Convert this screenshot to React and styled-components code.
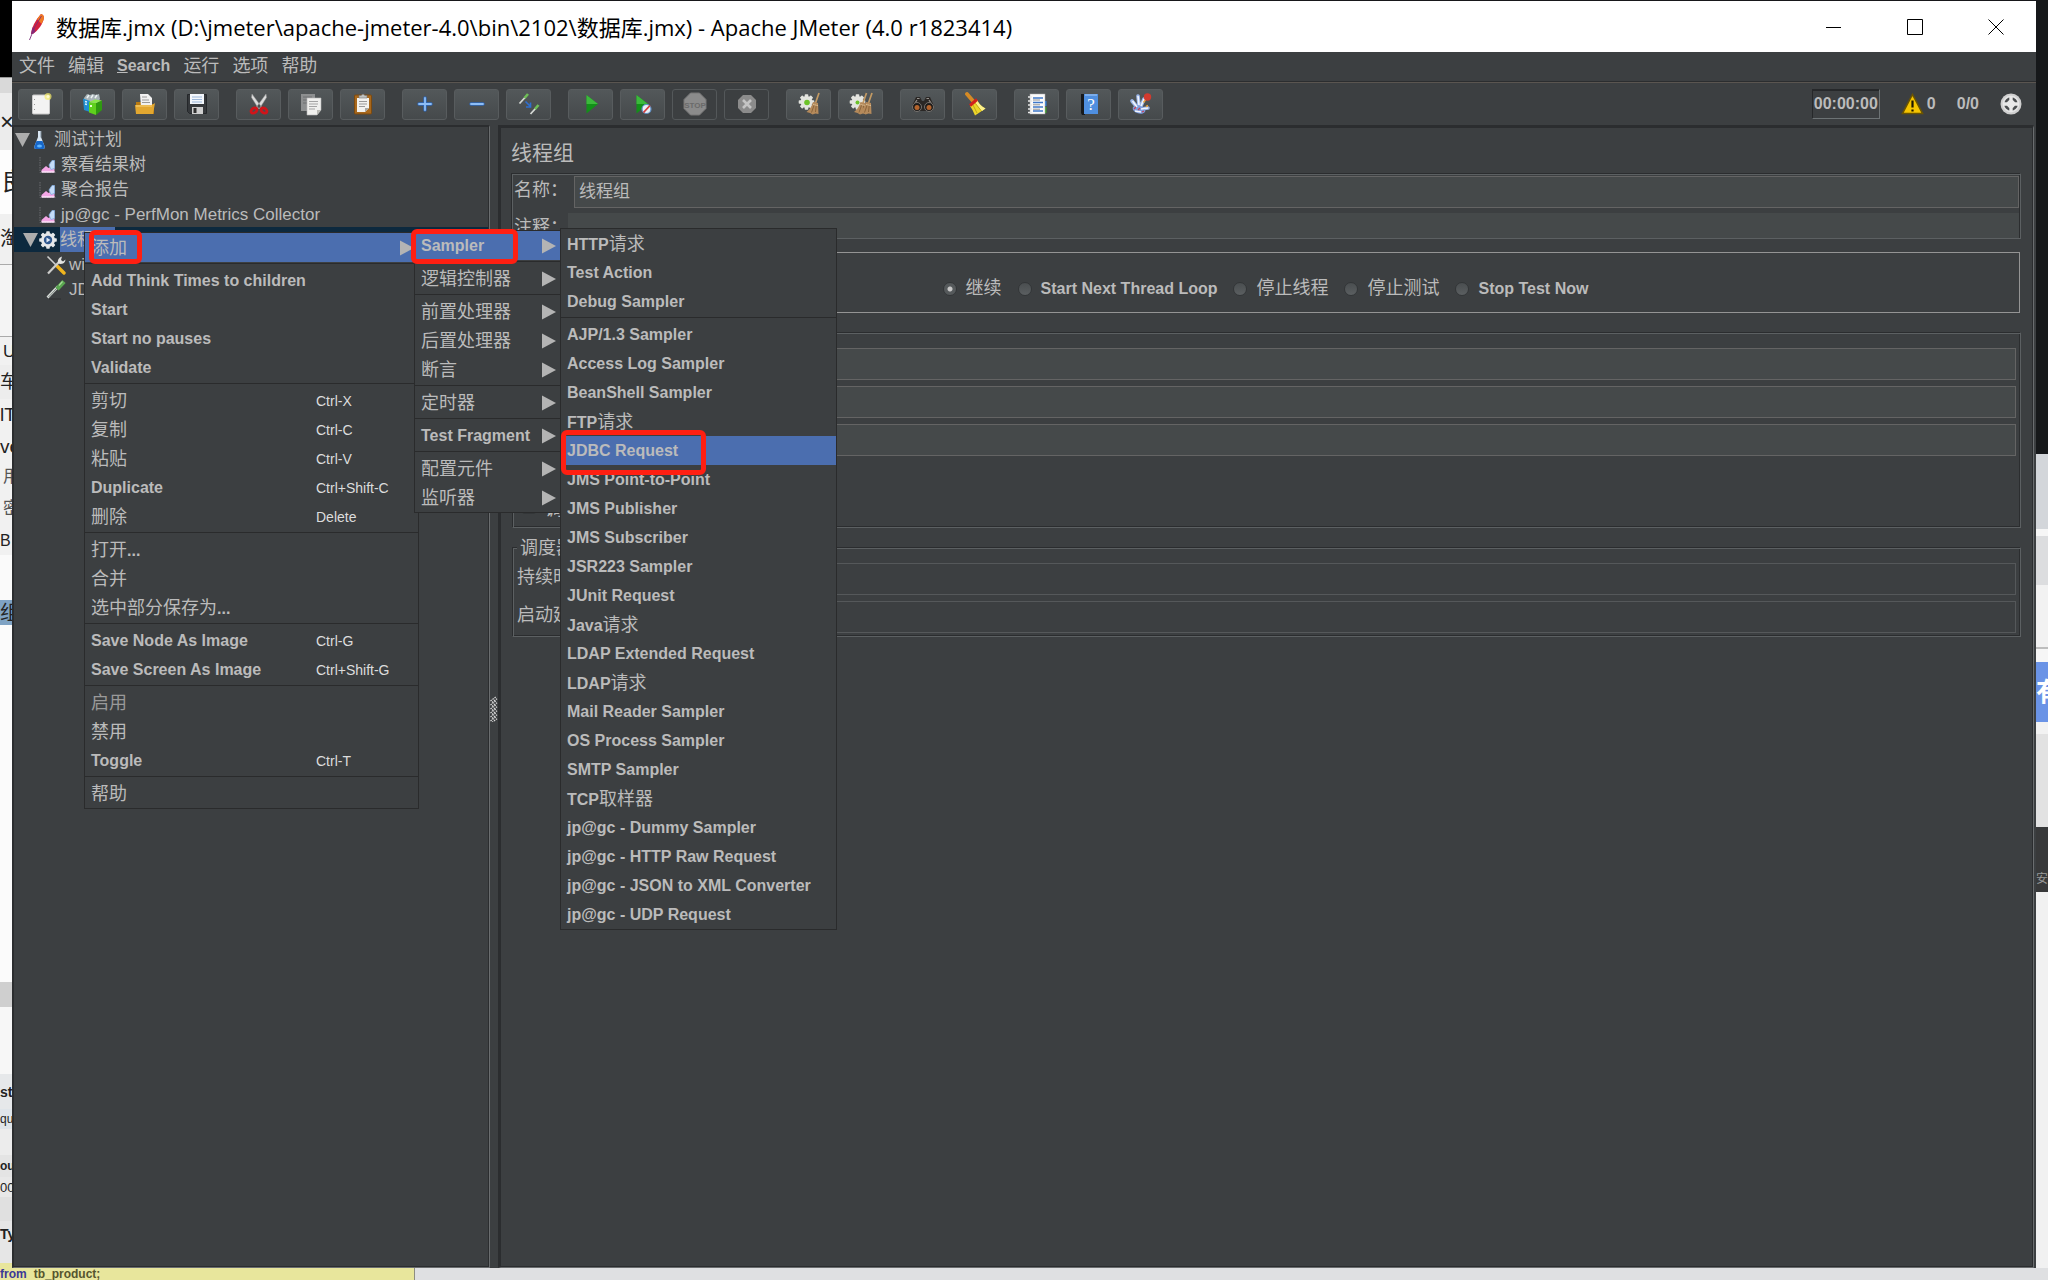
import React from "react";
import styled, { createGlobalStyle, css } from "styled-components";

const SANS = `"Liberation Sans", Arial, "Noto Sans CJK SC", sans-serif`;

const GlobalStyle = createGlobalStyle`
  *, *::before, *::after { box-sizing: border-box; }
  html, body { margin: 0; height: 100%; overflow: hidden; }
  #root { height: 100%; }
  body { background: #e6e6e8; font-family: ${SANS}; font-size: 16px; color: #bbbbbb; }
  button, input { font: inherit; color: inherit; margin: 0; }
  ul { list-style: none; margin: 0; padding: 0; }
`;

/* ---------- desktop behind the window ---------- */

const Desktop = styled.div`
  position: relative;
  display: grid;
  grid-template-columns: 12px minmax(0, 1fr) 12px;
  grid-template-rows: minmax(0, 1fr) 12px;
  height: 100vh;
  overflow: hidden;
`;

const Strip = styled.div`
  display: flex;
  flex-direction: column;
  overflow: hidden;
  min-height: 0;
`;

const Slab = styled.div`
  flex: ${(p) => (p.$h ? `0 0 ${p.$h}px` : "1 1 0")};
  display: flex;
  align-items: center;
  justify-content: flex-start;
  padding-left: ${(p) => p.$pad || 0}px;
  overflow: hidden;
  white-space: nowrap;
  line-height: 1;
  background: ${(p) => p.$bg};
  color: ${(p) => p.$fg || "#222"};
  font-size: ${(p) => p.$size || 18}px;
  font-weight: ${(p) => p.$weight || 400};
`;

const Footer = styled.div`
  grid-column: 1 / -1;
  display: flex;
  background: #dfe0e2;
`;

const SqlBar = styled.div`
  display: flex;
  align-items: center;
  gap: 7px;
  width: 415px;
  overflow: hidden;
  background: #e8e69c;
  border-right: 1px solid #8d8d80;
  color: #55552e;
  font: bold 12px/12px "Liberation Sans", sans-serif;
  b { color: #3b3a96; }
`;

/* ---------- window frame ---------- */

const Window = styled.main`
  display: flex;
  flex-direction: column;
  min-width: 0;
  min-height: 0;
  background: #3c3f41;
  border-top: 1px solid #17171a;
`;

const TitleBar = styled.header`
  flex: 0 0 51px;
  display: flex;
  align-items: center;
  background: #fff;
  color: #000;
  padding-left: 14px;
`;

const TitleText = styled.h1`
  flex: 1;
  margin: 0 0 0 10px;
  font: 400 22px/28px "Open Sans", "Noto Sans CJK SC", sans-serif;
  white-space: nowrap;
`;

const TitleButton = styled.button`
  width: 81px;
  height: 100%;
  border: 0;
  padding: 0;
  background: transparent;
  display: flex;
  align-items: center;
  justify-content: center;
`;

const MenuBar = styled.nav`
  flex: 0 0 31px;
  display: flex;
  align-items: center;
  gap: 13px;
  padding: 0 7px 2px;
  border-bottom: 1px solid #5a5550;
  box-shadow: inset 0 -1px #2b2d2f;
`;

const MenuBarButton = styled.button`
  border: 0;
  padding: 0;
  background: none;
  font-weight: bold;
  line-height: 24px;
`;

const Han = styled.span`
  font-size: 18px;
  font-weight: 400;
`;

const ToolBar = styled.div`
  flex: 0 0 42px;
  display: flex;
  align-items: center;
  gap: 17px;
  padding: 0 14px 0 6px;
`;

const ToolGroup = styled.div`
  display: flex;
  gap: 7px;
`;

const ToolButton = styled.button`
  width: 45px;
  height: 31px;
  padding: 0;
  display: flex;
  align-items: center;
  justify-content: center;
  border: 1px solid #585c5e;
  border-radius: 3px;
  background: linear-gradient(#53585a, #45494b);
  &:disabled { background: #3c3f41; border-color: #54585a; }
`;

const Status = styled.div`
  margin-left: auto;
  display: flex;
  align-items: center;
  font-weight: bold;
  gap: 21px;
`;

const Timer = styled.output`
  height: 30px;
  line-height: 28px;
  padding: 0 1px;
  border: 1px solid;
  border-color: #26282a #6d7375 #6d7375 #26282a;
  box-shadow: inset 0 1px #26282a;
`;

const Warning = styled.span`
  display: flex;
  align-items: center;
  gap: 3px;
`;

const Split = styled.div`
  flex: 1;
  display: flex;
  min-height: 0;
`;

/* ---------- tree ---------- */

const TreePane = styled.section`
  flex: 0 0 478px;
  border: solid;
  border-width: 2px 1px 1px 2px;
  border-color: #2b2d2f #6a6d6f #6a6d6f #2b2d2f;
  box-shadow: inset -1px -1px #2b2d2f;
  font-size: 17px;
`;

const TreeRow = styled.li`
  display: flex;
  align-items: center;
  height: 25px;
  margin-right: 1px;
  padding-left: ${(p) => p.$indent}px;
  white-space: nowrap;
  ${(p) => p.$selected && css`background: #0d293e;`}
`;

const TreeLabel = styled.span`
  line-height: 25px;
  margin-left: ${(p) => p.$gap}px;
  ${(p) => p.$selected && css`background: #4b6eaf; padding-right: 4px;`}
`;

const Divider = styled.div`
  flex: 0 0 8px;
  display: flex;
  align-items: center;
  justify-content: center;
  padding-top: 24px;
`;

/* ---------- editor pane ---------- */

const Editor = styled.section`
  flex: 1;
  min-width: 0;
  border: solid;
  border-width: 3px 1px 1px 3px;
  border-color: #2b2d2f #6a6d6f #6a6d6f #2b2d2f;
  box-shadow: inset -1px -1px #2b2d2f;
  margin-right: 2px;
  padding: 9px 12px 0 10px;
`;

const EditorTitle = styled.h2`
  margin: 0 0 4px;
  font-size: 21px;
  font-weight: 400;
  line-height: 32px;
`;

const etched = css`
  border: 1px solid;
  border-color: #2b2d2f #5c6062 #5c6062 #2b2d2f;
  box-shadow: inset 1px 1px #5c6062, inset -1px -1px #2b2d2f;
`;

const NameBox = styled.div`
  ${etched}
  display: flex;
  flex-direction: column;
  gap: 5px;
  padding: 2px 1px 0 2px;
`;

const NameRow = styled.div`
  display: flex;
  align-items: flex-start;
  gap: ${(p) => p.$gap}px;
`;

const Label = styled.label`
  flex: 0 0 ${(p) => p.$w}px;
  height: 25px;
  overflow: hidden;
  white-space: nowrap;
  font-size: 18px;
  line-height: 28px;
`;

const Field = styled.input`
  flex: 1;
  min-width: 0;
  height: 32px;
  padding: 0 4px 6px;
  font-size: 17px;
  border: 1px solid #646464;
  background: #45494a;
  &:disabled { background: #3c3f41; border-color: #55585a; }
`;

const CommentField = styled(Field)`
  height: 25px;
  border: 0;
`;

const ActionBox = styled.div`
  display: flex;
  align-items: center;
  justify-content: center;
  gap: 16px;
  height: 61px;
  margin: 13px 1px 0 0;
  padding-top: 12px;
  border: 1px solid #949494;
  font-weight: bold;
`;

const RadioLabel = styled.label`
  display: flex;
  align-items: center;
  gap: 9px;
  white-space: nowrap;
  line-height: 24px;
`;

const Radio = styled.input`
  appearance: none;
  width: 14px;
  height: 14px;
  border-radius: 50%;
  border: 1px solid #333638;
  background: linear-gradient(#4a4e50, #5b5f61);
  &:checked {
    background: radial-gradient(circle, #c8c8c8 0 2px, #55595b 3px);
  }
`;

const Group = styled.div`
  ${etched}
  position: relative;
  display: flex;
  flex-direction: column;
  gap: 6px;
  margin: 19px 0 0 1px;
  padding: 15px 4px ${(p) => p.$bottom}px 4px;
`;

const GroupTitle = styled.span`
  position: absolute;
  left: 4px;
  top: -12px;
  padding: 0 3px;
  background: #3c3f41;
  font-size: 18px;
  line-height: 24px;
`;

const GroupRow = styled.div`
  display: flex;
  gap: 6px;
`;

const CheckRow = styled.label`
  display: flex;
  align-items: center;
  gap: 9px;
  height: 26px;
  padding-left: 5px;
  font-size: 18px;
`;

const Check = styled.input`
  appearance: none;
  width: 14px;
  height: 14px;
  border: 1px solid #333638;
  border-radius: 2px;
  background: #5a5e58;
`;

/* ---------- pop-up menus ---------- */

const Popup = styled.ul`
  position: absolute;
  left: ${(p) => p.$x}px;
  top: ${(p) => p.$y}px;
  width: ${(p) => p.$w}px;
  background: #3c3f41;
  border: 1px solid #2a2b2c;
`;

const Item = styled.button`
  display: grid;
  grid-template-columns: minmax(0, 1fr) auto;
  align-items: center;
  width: 100%;
  height: 29px;
  padding: 0 4px 0 6px;
  border: 0;
  background: ${(p) => (p.$active ? "#4b6eaf" : "transparent")};
  text-align: left;
  font-weight: bold;
  line-height: 20px;
  white-space: nowrap;
  &:disabled { color: #999999; }
`;

const ItemText = styled.span`
  height: 20px;
`;

const Shortcut = styled.kbd`
  width: 98px;
  font: 400 14px/18px ${SANS};
  color: #dddddd;
`;

const Separator = styled.li`
  height: 4px;
  padding-top: 1px;
  &::before { content: ""; display: block; height: 1px; background: #2a2b2c; }
`;

const Marker = styled.div`
  position: absolute;
  left: ${(p) => p.$x}px;
  top: ${(p) => p.$y}px;
  width: ${(p) => p.$w}px;
  height: ${(p) => p.$h}px;
  border: 5px solid #ff1f12;
  border-radius: 6px;
  pointer-events: none;
`;

/* ---------- drawings ---------- */

const Svg = ({ w = 24, h = 24, vb = "0 0 24 24", children }) => (
  <svg width={w} height={h} viewBox={vb} fill="none" aria-hidden="true">
    {children}
  </svg>
);

const Broom = ({ x = 0 }) => (
  <g transform={`translate(${x} 0)`}>
    <path d="M19.500 1 16 11" stroke="#c39a63" strokeWidth="1.700" />
    <path d="M13.500 10 18.500 11 19 22 16 21.500 13 22.500 10.500 21 7 20Q12 16 13.500 10Z" fill="#b58a5b" />
    <path d="M15 12 12 20.500M16.800 12.500 16 20" stroke="#7f5a32" strokeWidth=".8" />
    <path d="M13.500 12.500 18.500 13.500" stroke="#e1c294" strokeWidth=".9" />
  </g>
);

const Cog = ({ cx, cy, r, fill }) => (
  <g>
    {[0, 45, 90, 135].map((a) => (
      <rect key={a} x={cx - 1.800} y={cy - r - 1.800} width="3.600" height={2 * r + 3.600} rx=".8" fill={fill} transform={`rotate(${a} ${cx} ${cy})`} />
    ))}
    <circle cx={cx} cy={cy} r={r} fill={fill} />
  </g>
);

const icons = {
  new: (
    <>
      <rect x="3.500" y="3" width="17" height="19" rx="1" fill="#f3f3f3" stroke="#c9c9c9" />
      <path d="M5.500 7v1M5.500 12v1M5.500 17v1" stroke="#999" />
      <circle cx="19" cy="4.500" r="3.500" fill="#f6ec6b" opacity=".7" />
      <circle cx="19" cy="4.500" r="1.500" fill="#fffbd0" />
    </>
  ),
  templates: (
    <>
      <path d="M3 6 6 2l3 1 3-1 3 1 3-1 1 5-3 4H4Z" fill="#a9b4b8" />
      <path d="M6 6 8 3M10 6l2-3M14 6l2-3" stroke="#eef2f3" strokeWidth="1.500" />
      <path d="M2 6.500 9 9v11L3 18Z" fill="#1f8fd1" />
      <path d="M4 9.500 6 10M4 12l2 .5" stroke="#d4efff" strokeWidth="1.500" />
      <path d="M8 10 15 11v12L8 20.500Z" fill="#5fd11d" />
      <path d="M15 11 21 8.500V18l-6 5Z" fill="#2f9a10" />
      <path d="M8 10 14 7.500 21 8.500 15 11Z" fill="#8ae84a" />
      <path d="M10 13v2" stroke="#e6ffd4" strokeWidth="2" />
    </>
  ),
  open: (
    <>
      <path d="M3 10h7l1 2h10v10H3Z" fill="#b87a12" />
      <path d="M7 2h8l4 4v9H8Z" fill="#f1f1f1" />
      <path d="M9 5h5M9 8h7M9 10.500h8" stroke="#9a9a9a" />
      <path d="M2 13h17l3-2-2 11H3Z" fill="#e2a730" />
      <path d="M3 14h16" stroke="#f7d27a" />
    </>
  ),
  save: (
    <>
      <path d="M2.500 2.500h19v19h-17l-2-2Z" fill="#35383b" stroke="#24272a" />
      <rect x="5" y="2" width="14" height="10" fill="#f2f6fb" />
      <path d="M7 5h10M7 7.500h10M7 10h10" stroke="#9bb6d8" />
      <rect x="7" y="15" width="11" height="7" fill="#cfcfcf" />
      <rect x="8.500" y="16" width="3" height="5" fill="#303030" />
    </>
  ),
  cut: (
    <>
      <path d="M5 2 14.500 15l-3 1.500L4.500 5.500ZM19 2 9.500 15l3 1.500L19.500 5.500Z" fill="#dcdcdc" stroke="#9a9a9a" strokeWidth=".5" />
      <ellipse cx="7" cy="18.500" rx="3.200" ry="2.300" transform="rotate(-35 7 18.500)" stroke="#d0141a" strokeWidth="2.800" />
      <ellipse cx="17" cy="18.500" rx="3.200" ry="2.300" transform="rotate(35 17 18.500)" stroke="#d0141a" strokeWidth="2.800" />
    </>
  ),
  copy: (
    <>
      <path d="M2 2h14v17H2Z" fill="#8d8f90" />
      <path d="M4 5h9M4 8h5M4 11h4" stroke="#6d6f70" />
      <path d="M8 6h14v12l-4 5H8Z" fill="#f0f0ee" stroke="#b5b5b5" strokeWidth=".6" />
      <path d="M22 18h-4v5Z" fill="#b9b9b4" />
      <path d="M10 9.500h9M10 12h9M10 14.500h8M10 17h6" stroke="#a4a4a4" />
    </>
  ),
  paste: (
    <>
      <rect x="3.500" y="3" width="17" height="19" rx="1" fill="#a8681c" stroke="#7c4a10" />
      <path d="M6 6h12v10l-4 4H6Z" fill="#f2f2ef" />
      <path d="M18 16h-4v4Z" fill="#a9a9a5" />
      <path d="M8 9.500h8M8 12h8M8 14.500h6" stroke="#999" />
      <path d="M8 3.500h2L12 2l2 1.500h2V6H8Z" fill="#bfc2c0" stroke="#777" strokeWidth=".6" />
    </>
  ),
  plus: (
    <>
      <path d="M12 6v12M6 12h12" stroke="#2f68b8" strokeWidth="3.400" strokeLinecap="round" />
      <path d="M12 6v12M6 12h12" stroke="#8dbdf5" strokeWidth="1.800" strokeLinecap="round" />
    </>
  ),
  minus: (
    <>
      <path d="M6 12h12" stroke="#2f68b8" strokeWidth="3.400" strokeLinecap="round" />
      <path d="M6 12h12" stroke="#8dbdf5" strokeWidth="1.800" strokeLinecap="round" />
    </>
  ),
  toggle: (
    <>
      <path d="M2.500 11.500 8 5.500" stroke="#d5d9d5" strokeWidth="1.800" />
      <path d="M7.500 6 11 2" stroke="#6fbf57" strokeWidth="2.600" />
      <path d="M13.500 22 18.500 16.500" stroke="#d5d9d5" strokeWidth="1.800" />
      <path d="M18 17 21.500 13" stroke="#6fbf57" strokeWidth="2.600" />
      <path d="M8.500 9.500 13 14M13.500 10.500V15H9" stroke="#2f6fd0" strokeWidth="1.600" />
    </>
  ),
  start: (
    <>
      <path d="M7.500 3 19 12 7.500 21.500Z" fill="#129018" />
      <path d="M7.500 3 19 12H7.500Z" fill="#3cb93c" />
    </>
  ),
  startNoTimers: (
    <>
      <path d="M5.500 3 17 12 5.500 21.500Z" fill="#129018" />
      <path d="M5.500 3 17 12H5.500Z" fill="#3cb93c" />
      <circle cx="15.500" cy="17" r="4.500" fill="#e9f0f7" stroke="#5e8fc7" strokeWidth="1.200" />
      <path d="M12.500 20.500 19 13.500" stroke="#d43a3a" strokeWidth="1.800" />
    </>
  ),
  stop: (
    <>
      <path d="M7.500 1h9L23 7.500v9L16.500 23h-9L1 16.500v-9Z" fill="#8b8b8b" stroke="#777" />
      <text x="12" y="15.500" textAnchor="middle" fontSize="8" fontWeight="bold" fontFamily="Liberation Sans" fill="#6a6a6a">STOP</text>
    </>
  ),
  shutdown: (
    <>
      <path d="M8 3h8l5 5v8l-5 5H8l-5-5V8Z" fill="#8b8b8b" />
      <path d="M8 8l8 8M16 8l-8 8" stroke="#c4c4c4" strokeWidth="2.600" />
    </>
  ),
  clear: (
    <>
      <Cog cx={9.5} cy={10} r={6} fill="#e3e4df" />
      <circle cx="10" cy="10.500" r="2.800" fill="#6cc22a" />
      <Broom x={2.500} />
    </>
  ),
  clearAll: (
    <>
      <Cog cx={8.5} cy={10} r={6} fill="#e3e4df" />
      <circle cx="8.500" cy="10.500" r="2" fill="#6cc22a" />
      <Broom x={-2} />
      <Broom x={3.500} />
    </>
  ),
  search: (
    <>
      <path d="M5 5h4l2 4h2l2-4h4l4 9-2 5H3l-2-5Z" fill="#2a2725" />
      <path d="M6 6.500h2.500M15.500 6.500H18M4 11l2-3M20 11l-2-3" stroke="#96928d" strokeWidth="1.200" />
      <circle cx="6" cy="15" r="4.500" fill="#1d1b1a" stroke="#77736f" />
      <circle cx="18" cy="15" r="4.500" fill="#1d1b1a" stroke="#77736f" />
      <circle cx="6" cy="15.500" r="2.500" fill="#b3642d" />
      <circle cx="18" cy="15.500" r="2.500" fill="#b3642d" />
    </>
  ),
  resetSearch: (
    <>
      <path d="M4 2 10 9" stroke="#d58a25" strokeWidth="3.800" strokeLinecap="round" />
      <path d="M14 8Q17 14 22.500 16.500L12 23.500Q10 18 7 14Z" fill="#ecd52a" />
      <path d="M14 8Q17 14 22.500 16.500L19 19Q14 14 12 10Z" fill="#fbf08a" />
      <path d="M10 13 14 21M12.500 11.500l5.500 7" stroke="#b39a10" strokeWidth=".8" />
      <path d="M7 13.500 14 7.500" stroke="#d2201b" strokeWidth="3" />
    </>
  ),
  functions: (
    <>
      <path d="M18 9h3.500v5H18Z" fill="#2f7fdd" />
      <path d="M18 15h3.500v6H18Z" fill="#3d9c2b" />
      <rect x="5" y="2" width="15" height="20" fill="#fbfbfb" stroke="#aaa" strokeWidth=".5" />
      <path d="M8 6h10M8 10.500h10M8 15h10M8 19h10" stroke="#3f78c9" strokeWidth="1.400" />
      <path d="M8 8h7M8 12.800h7M8 17.200h7" stroke="#777" strokeWidth=".8" />
      <path d="M3 5h4M3 9h4M3 13h4M3 17h4M3 20.500h4" stroke="#e9e9e9" strokeWidth="1.600" />
    </>
  ),
  help: (
    <>
      <path d="M4 2h4v21H5L4 21Z" fill="#17191c" />
      <rect x="7" y="2" width="14" height="20" fill="#4f8fe0" />
      <path d="M8 3h12" stroke="#a8cbf7" />
      <text x="14" y="18" textAnchor="middle" fontSize="17" fontFamily="Liberation Serif" fill="#fff">?</text>
    </>
  ),
  undo: (
    <>
      <path d="M3 9 8 15M9 4l1 9M15 7l-3 7M19 16l-7 1" stroke="#9db8ec" strokeWidth="3.600" strokeLinecap="round" />
      <ellipse cx="10" cy="17.500" rx="6.500" ry="4" transform="rotate(15 10 17.500)" fill="#7f9fe0" />
      <path d="M3.500 9 8 15M9 4l1 9M15 7l-3 7M19 16l-7 1M6 19l6 1" stroke="#f2f5fc" strokeWidth="1.600" />
      <path d="M5 17l2-2M9 18l2-2M13 20l2-1" stroke="#c53f55" strokeWidth="1.200" />
      <path d="M14.500 10.500 16.500 8M17 14.500l2-1" stroke="#e9a03b" strokeWidth="1.400" />
      <circle cx="18.500" cy="5" r="3.700" fill="#d23a2e" />
    </>
  ),
};

const Feather = () => (
  <Svg w={20} h={28} vb="0 0 20 28">
    <path d="M15 1Q19 2 17.500 7 15 15 7.500 20.500L5 21Q6 11 15 1Z" fill="#d3203f" />
    <path d="M15 1Q19 2 17.500 7L15.500 11 11 6Z" fill="#f07a22" />
    <path d="M5 21Q5.500 17 7 13.500L9.500 18.500 7.500 20.500Z" fill="#8a2678" />
    <path d="M15.500 3Q8 13 3.500 27" stroke="#7a2c78" strokeWidth=".9" />
  </Svg>
);

const ArrowRight = () => (
  <Svg w={14} h={16} vb="0 0 14 16"><path d="M0 .5 14 8 0 15.500Z" fill="#b4b4b4" /></Svg>
);
const ArrowDown = () => (
  <Svg w={15} h={14} vb="0 0 15 14"><path d="M0 0H15L7.500 14Z" fill="#adadad" /></Svg>
);
const Flask = () => (
  <Svg w={18} h={20} vb="0 0 18 20">
    <path d="M8 1h3v6l3.500 9q.8 3-1.500 3H6q-2.300 0-1.500-3L8 7Z" fill="#d8e6f2" />
    <path d="M6.500 11h6l2 5q.8 3-1.500 3H6q-2.300 0-1.500-3Z" fill="#1767c9" />
    <ellipse cx="9.500" cy="16" rx="2.500" ry="1.500" fill="#5db4ff" />
    <path d="M11 1v6.500" stroke="#7c8b98" />
  </Svg>
);
const Chart = () => (
  <Svg w={17} h={18} vb="0 0 17 18">
    <path d="M1 1v15.500H16.500" stroke="#6a6d70" strokeDasharray="1.500 1" />
    <path d="M2.500 16V14L7 10l2.500 2 2-1 4 2v3Z" fill="#f4a6e6" />
    <path d="M10 9 13 4.500h2.500v8l-3.500 1Z" fill="#c5dcf8" stroke="#86aee0" strokeWidth=".8" />
    <path d="M2.500 16h13" stroke="#fde3f8" strokeWidth="1.500" />
  </Svg>
);
const GearIcon = () => (
  <Svg w={20} h={20} vb="0 0 20 20">
    <Cog cx={10} cy={10} r={7} fill="#e6e8ea" />
    <circle cx="10" cy="10" r="4.200" fill="#30588f" />
    <path d="M8.500 7.500 12.500 10 8.500 12.500Z" fill="#dfe9f7" />
  </Svg>
);
const Tools = () => (
  <Svg w={20} h={20} vb="0 0 20 20">
    <path d="M1.500 1.500 11 11" stroke="#cfd0d0" strokeWidth="1.600" />
    <path d="M11 11 18 18" stroke="#f0b51e" strokeWidth="3.400" strokeLinecap="round" />
    <path d="M2 18.500 13 7" stroke="#cdcdcb" strokeWidth="2.200" />
    <path d="M12 8Q11 3 16 1.500L15 5l2 1.500 2.500-2Q19 9 14 9Z" fill="#e3e3e1" />
  </Svg>
);
const Pipette = () => (
  <Svg w={20} h={20} vb="0 0 20 20">
    <path d="M1.500 17.500 12 6.500" stroke="#d7dcd8" strokeWidth="2.600" />
    <path d="M2.500 17 11 8" stroke="#6e7672" strokeWidth=".9" />
    <path d="M11 9 18 1.500" stroke="#5aa650" strokeWidth="4.400" />
    <path d="M13 5.500 16.500 1.500" stroke="#a9dc9a" strokeWidth="1.200" />
    <path d="M3 19h12" stroke="#2c2f30" />
  </Svg>
);
const WarnIcon = () => (
  <Svg w={23} h={22} vb="0 0 23 22">
    <path d="M11.500 1.500 21.500 20.500H1.500Z" fill="#f5c400" stroke="#6b5400" strokeWidth="1.600" />
    <path d="M11.500 7.500v7M11.500 16.500v2" stroke="#1a1400" strokeWidth="2.200" />
  </Svg>
);
const ThreadsIcon = () => (
  <Svg w={22} h={22} vb="0 0 22 22">
    <circle cx="11" cy="11" r="10.500" fill="#cfcfcf" />
    <circle cx="11" cy="11" r="8.500" fill="#e4e4e4" />
    <circle cx="11" cy="11" r="5.500" stroke="#4a4d4f" strokeWidth="2.600" />
    <path d="M11 3v16M3 11h16" stroke="#e9e9e9" strokeWidth="3.400" />
  </Svg>
);
const Grip = () => (
  <Svg w={8} h={26} vb="0 0 8 26">
    {[0, 4, 8, 12, 16, 20].map((y) => (
      <path key={y} d={`M.5 ${y + 5}l6-4.500M2 ${y + 6.500}l5-3.800`} stroke="#dadada" strokeWidth="1.200" strokeDasharray="1.500 1" />
    ))}
  </Svg>
);

/* ---------- text helper ---------- */

const Mixed = ({ text }) =>
  text.split(/([\u4e00-\u9fff]+)/).filter(Boolean).map((part, i) =>
    /[\u4e00-\u9fff]/.test(part) ? <Han key={i}>{part}</Han> : <React.Fragment key={i}>{part}</React.Fragment>
  );

/* ---------- data ---------- */

const toolGroups = [
  [["new", "New"], ["templates", "Templates"], ["open", "Open"], ["save", "Save"]],
  [["cut", "Cut"], ["copy", "Copy"], ["paste", "Paste"]],
  [["plus", "Expand All"], ["minus", "Collapse All"], ["toggle", "Toggle"]],
  [["start", "Start"], ["startNoTimers", "Start no pauses"], ["stop", "Stop", true], ["shutdown", "Shutdown", true]],
  [["clear", "Clear"], ["clearAll", "Clear All"]],
  [["search", "Search"], ["resetSearch", "Reset Search"]],
  [["functions", "Function Helper"], ["help", "Help"], ["undo", "Plugins"]],
];

const contextMenu = [
  { t: "添加", sub: true, active: true }, null,
  { t: "Add Think Times to children" }, { t: "Start" }, { t: "Start no pauses" }, { t: "Validate" }, null,
  { t: "剪切", k: "Ctrl-X" }, { t: "复制", k: "Ctrl-C" }, { t: "粘贴", k: "Ctrl-V" },
  { t: "Duplicate", k: "Ctrl+Shift-C" }, { t: "删除", k: "Delete" }, null,
  { t: "打开..." }, { t: "合并" }, { t: "选中部分保存为..." }, null,
  { t: "Save Node As Image", k: "Ctrl-G" }, { t: "Save Screen As Image", k: "Ctrl+Shift-G" }, null,
  { t: "启用", off: true }, { t: "禁用" }, { t: "Toggle", k: "Ctrl-T" }, null,
  { t: "帮助" },
];

const addMenu = [
  { t: "Sampler", sub: true, active: true }, null,
  { t: "逻辑控制器", sub: true }, null,
  { t: "前置处理器", sub: true }, { t: "后置处理器", sub: true }, { t: "断言", sub: true }, null,
  { t: "定时器", sub: true }, null,
  { t: "Test Fragment", sub: true }, null,
  { t: "配置元件", sub: true }, { t: "监听器", sub: true },
];

const samplerMenu = [
  ...["HTTP请求", "Test Action", "Debug Sampler"].map((t) => ({ t })),
  null,
  ...[
    "AJP/1.3 Sampler", "Access Log Sampler", "BeanShell Sampler", "FTP请求", "JDBC Request",
    "JMS Point-to-Point", "JMS Publisher", "JMS Subscriber", "JSR223 Sampler", "JUnit Request",
    "Java请求", "LDAP Extended Request", "LDAP请求", "Mail Reader Sampler", "OS Process Sampler",
    "SMTP Sampler", "TCP取样器", "jp@gc - Dummy Sampler", "jp@gc - HTTP Raw Request",
    "jp@gc - JSON to XML Converter", "jp@gc - UDP Request",
  ].map((t) => ({ t, active: t === "JDBC Request" })),
];

const Menu = ({ items, x, y, w, label }) => (
  <Popup role="menu" aria-label={label} $x={x} $y={y} $w={w}>
    {items.map((it, i) =>
      it === null ? (
        <Separator key={i} role="separator" />
      ) : (
        <li key={i} role="none">
          <Item role="menuitem" $active={it.active} disabled={it.off}>
            <ItemText><Mixed text={it.t} /></ItemText>
            {it.k && <Shortcut>{it.k}</Shortcut>}
            {it.sub && <ArrowRight />}
          </Item>
        </li>
      )
    )}
  </Popup>
);

const actions = ["继续", "Start Next Thread Loop", "停止线程", "停止测试", "Stop Test Now"];

/* height, background, text, size, weight, colour, left padding */
const leftSlabs = [
  [77, "#000"], [1, "#999"], [15, "#d9d9d9"], [57, "#ececec", "×", 24], [64, "#fdfdfd", "良", 24, 400, "#222", 1],
  [50, "#f0f0f0", "淘", 20], [1, "#aaa"], [71, "#f4f4f4"], [1, "#aaa"],
  [28, "#f1f1f1", "U", 17, 400, "#222", 3], [34, "#ededed", "车", 18], [30, "#f1f1f1", "lT", 19], [34, "#f1f1f1", "ve", 19],
  [26, "#f1f1f1", "用", 17, 400, "#555", 3], [38, "#f1f1f1", "密", 17, 400, "#555", 3], [28, "#f1f1f1", "B", 16], [45, "#fafafa"],
  [25, "#7fa3c4", "组", 20], [357, "#fbfbfb"], [25, "#cfcfcf"], [67, "#f7f7f7"],
  [35, "#e6e8ea", "st", 14, 700], [20, "#dfe5ea", "qu", 12], [26, "#ececec"], [22, "#e4e4e4", "ou", 12, 700],
  [20, "#e8e8e8", "00", 13], [24, "#e0e0e0"], [26, "#e6e6e6", "Ty", 14, 700], [16, "#e6e6e6"], [0, "#e8e69c"],
];

const rightSlabs = [
  [454, "#16181a"], [75, "#d3d6da"], [7, "#f6f6f6"], [49, "#dcdddf"], [62, "#f2f2f2"], [2, "#bdbdbd"],
  [13, "#f6f6f6"], [60, "#6a93e6", "有", 26, 700, "#fff"], [12, "#f2f2f2"], [93, "#e2e2e2"],
  [39, "#38393a"], [26, "#38393a", "安积", 12, 400, "#999"], [0, "#f1f1f1"],
];

const Slabs = ({ data }) => (
  <Strip aria-hidden="true">
    {data.map(([h, bg, text, size, weight, fg, pad], i) => (
      <Slab key={i} $h={h} $bg={bg} $size={size} $weight={weight} $fg={fg} $pad={pad}>{text}</Slab>
    ))}
  </Strip>
);

export default function App() {
  return (
    <Desktop>
      <GlobalStyle />
      <Slabs data={leftSlabs} />
      <Window>
        <TitleBar>
          <Feather />
          <TitleText>数据库.jmx (D:\jmeter\apache-jmeter-4.0\bin\2102\数据库.jmx) - Apache JMeter (4.0 r1823414)</TitleText>
          <TitleButton aria-label="Minimize"><Svg w={16} h={16} vb="0 0 16 16"><path d="M0 8.500H15" stroke="#000" /></Svg></TitleButton>
          <TitleButton aria-label="Maximize"><Svg w={16} h={16} vb="0 0 16 16"><path d="M.5 .5h15v15H.5Z" stroke="#000" /></Svg></TitleButton>
          <TitleButton aria-label="Close"><Svg w={16} h={16} vb="0 0 16 16"><path d="M.5 .5l15 15M15.500 .5l-15 15" stroke="#000" /></Svg></TitleButton>
        </TitleBar>
        <MenuBar>
          {["文件", "编辑", "Search", "运行", "选项", "帮助"].map((t) => (
            <MenuBarButton key={t}>
              {t === "Search" ? <><u>S</u>earch</> : <Mixed text={t} />}
            </MenuBarButton>
          ))}
        </MenuBar>
        <ToolBar role="toolbar">
          {toolGroups.map((group, i) => (
            <ToolGroup key={i}>
              {group.map(([id, label, off]) => (
                <ToolButton key={id} aria-label={label} disabled={off}><Svg>{icons[id]}</Svg></ToolButton>
              ))}
            </ToolGroup>
          ))}
          <Status>
            <Timer>00:00:00</Timer>
            <Warning><WarnIcon />0</Warning>
            <span>0/0</span>
            <ThreadsIcon />
          </Status>
        </ToolBar>
        <Split>
          <TreePane>
            <ul role="tree">
              <TreeRow role="treeitem" $indent={1}><ArrowDown /><Flask /><TreeLabel $gap={6}>测试计划</TreeLabel></TreeRow>
              {["察看结果树", "聚合报告", "jp@gc - PerfMon Metrics Collector"].map((t) => (
                <TreeRow role="treeitem" key={t} $indent={25}><Chart /><TreeLabel $gap={5}>{t}</TreeLabel></TreeRow>
              ))}
              <TreeRow role="treeitem" $indent={9} $selected><ArrowDown /><GearIcon /><TreeLabel $gap={2} $selected>线程组</TreeLabel></TreeRow>
              <TreeRow role="treeitem" $indent={32}><Tools /><TreeLabel $gap={3}>win</TreeLabel></TreeRow>
              <TreeRow role="treeitem" $indent={32}><Pipette /><TreeLabel $gap={3}>JDBC</TreeLabel></TreeRow>
            </ul>
          </TreePane>
          <Divider><Grip /></Divider>
          <Editor>
            <EditorTitle>线程组</EditorTitle>
            <NameBox>
              <NameRow $gap={6}><Label $w={54} htmlFor="name">名称：</Label><Field id="name" defaultValue="线程组" /></NameRow>
              <NameRow $gap={0}><Label $w={54} htmlFor="comment">注释：</Label><CommentField id="comment" /></NameRow>
            </NameBox>
            <ActionBox role="radiogroup">
              {actions.map((t, i) => (
                <RadioLabel key={t}><Radio type="radio" name="onError" defaultChecked={i === 0} /><span><Mixed text={t} /></span></RadioLabel>
              ))}
            </ActionBox>
            <Group $bottom={7}>
              {["线程数", "Ramp-Up", "循环次数"].map((t) => (
                <GroupRow key={t}><Field aria-label={t} /></GroupRow>
              ))}
              <CheckRow><Check type="checkbox" aria-label="Delay Thread creation" /></CheckRow>
              <CheckRow><Check type="checkbox" />调度器</CheckRow>
            </Group>
            <Group $bottom={3}>
              <GroupTitle>调度器配置</GroupTitle>
              <GroupRow><Label $w={130} htmlFor="duration">持续时间（秒）</Label><Field id="duration" disabled /></GroupRow>
              <GroupRow><Label $w={130} htmlFor="delay">启动延迟（秒）</Label><Field id="delay" disabled /></GroupRow>
            </Group>
          </Editor>
        </Split>
      </Window>
      <Slabs data={rightSlabs} />
      <Footer><SqlBar><b>from</b><span>tb_product;</span></SqlBar></Footer>

      <Menu items={contextMenu} x={84} y={232} w={335} label="线程组" />
      <Menu items={addMenu} x={414} y={230} w={147} label="添加" />
      <Menu items={samplerMenu} x={560} y={228} w={277} label="Sampler" />
      <Marker $x={89} $y={230} $w={53} $h={34} />
      <Marker $x={411} $y={229} $w={107} $h={35} />
      <Marker $x={561} $y={430} $w={145} $h={45} />
    </Desktop>
  );
}
